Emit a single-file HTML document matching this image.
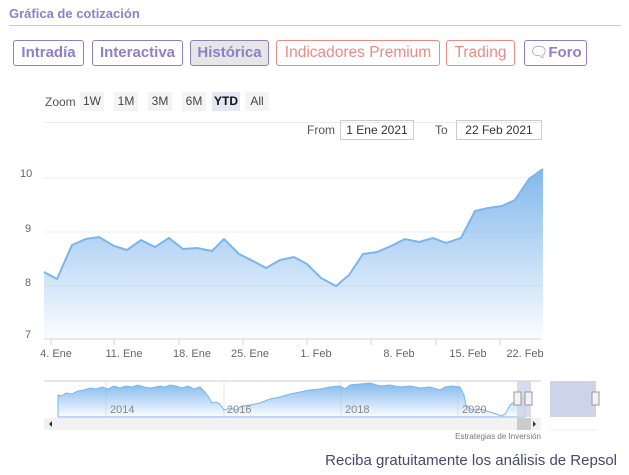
<!DOCTYPE html>
<html><head><meta charset="utf-8"><style>
body{margin:0;width:629px;height:475px;background:#fff;font-family:"Liberation Sans",sans-serif;position:relative;overflow:hidden}
.t{position:absolute;left:9px;top:6px;font-size:13px;font-weight:bold;color:#8d7fc9}
.hr{position:absolute;left:9px;top:25px;width:612px;height:1px;background:#cfc6e8}
.b{position:absolute;top:40px;height:26px;box-sizing:border-box;border:1px solid #8d7fc9;border-radius:3px;font-size:15px;font-weight:bold;color:#8d7fc9;line-height:24px;text-align:center;white-space:nowrap}
.r{border-color:#ec8a86;color:#ec8a86;font-weight:normal;font-size:15.5px}
.z{position:absolute;top:92px;height:19px;background:#f4f4f4;font-size:12px;color:#444;line-height:19px;text-align:center;width:24px}
.sm{position:absolute;font-size:11px;color:#555}
.inp{position:absolute;top:120px;height:20px;box-sizing:border-box;border:1px solid #ccc;font-size:12px;color:#333;text-align:center;line-height:18px}
</style></head><body>
<div class="t">Gráfica de cotización</div><div class="hr"></div>
<div class="b" style="left:13px;width:71px">Intradía</div>
<div class="b" style="left:92px;width:91px">Interactiva</div>
<div class="b" style="left:190px;width:79px;background:#e6e6e6">Histórica</div>
<div class="b r" style="left:276px;width:164px">Indicadores Premium</div>
<div class="b r" style="left:446px;width:69px">Trading</div>
<div class="b" style="left:524px;width:63px"><span style="font-weight:normal">🗨</span>Foro</div>
<div class="sm" style="left:45px;top:95px;font-size:12px">Zoom</div>
<div class="z" style="left:80px">1W</div><div class="z" style="left:114px">1M</div><div class="z" style="left:148px">3M</div><div class="z" style="left:182px">6M</div><div class="z" style="left:212px;width:28px;background:#e4e8f4;font-weight:bold;color:#111">YTD</div><div class="z" style="left:245px">All</div>
<div style="position:absolute;left:44px;top:122px;width:497px;height:1px;background:#ececec"></div>
<div class="sm" style="left:307px;top:123px;font-size:12px">From</div>
<div class="inp" style="left:340px;width:74px">1 Ene 2021</div>
<div class="sm" style="left:435px;top:123px;font-size:12px">To</div>
<div class="inp" style="left:456px;width:86px">22 Feb 2021</div>
<svg style="position:absolute;left:0;top:0" width="629" height="475">
<defs><linearGradient id="g" x1="0" y1="0" x2="0" y2="1"><stop offset="0" stop-color="#7cb5ec" stop-opacity=".95"/><stop offset="1" stop-color="#7cb5ec" stop-opacity=".03"/></linearGradient></defs>
<g stroke="#ececec"><line x1="44" x2="541" y1="178" y2="178"/><line x1="44" x2="541" y1="232" y2="232"/><line x1="44" x2="541" y1="286" y2="286"/></g>
<path d="M44,272 L57,279 L72,245 L86,239 L99,237 L114,246 L127,250 L141,240 L155,247 L169,238 L183,249 L197,248 L212,251 L224,239 L239,254 L253,261 L266,268 L280,260 L294,257 L307,264 L321,278 L336,286 L349,275 L363,254 L377,252 L391,246 L405,239 L419,242 L433,238 L446,243 L461,238 L475,211 L488,208 L502,206 L515,200 L529,179 L543,169 L543,339 L44,339Z" fill="url(#g)"/>
<path d="M44,272 L57,279 L72,245 L86,239 L99,237 L114,246 L127,250 L141,240 L155,247 L169,238 L183,249 L197,248 L212,251 L224,239 L239,254 L253,261 L266,268 L280,260 L294,257 L307,264 L321,278 L336,286 L349,275 L363,254 L377,252 L391,246 L405,239 L419,242 L433,238 L446,243 L461,238 L475,211 L488,208 L502,206 L515,200 L529,179 L543,169" fill="none" stroke="#7cb5ec" stroke-width="2"/>
<line x1="44" x2="541" y1="339" y2="339" stroke="#ccd6eb"/>
<g stroke="#ccd6eb"><line x1="51" x2="51" y1="339" y2="345"/><line x1="114" x2="114" y1="339" y2="345"/><line x1="179" x2="179" y1="339" y2="345"/><line x1="243" x2="243" y1="339" y2="345"/><line x1="307" x2="307" y1="339" y2="345"/><line x1="371" x2="371" y1="339" y2="345"/><line x1="436" x2="436" y1="339" y2="345"/><line x1="500" x2="500" y1="339" y2="345"/></g>
<g font-size="11" fill="#666" font-family="Liberation Sans"><text x="20" y="177">10</text><text x="25" y="232">9</text><text x="25" y="286">8</text><text x="25" y="338">7</text>
<g text-anchor="middle"><text x="56" y="357">4. Ene</text><text x="124" y="357">11. Ene</text><text x="192" y="357">18. Ene</text><text x="250" y="357">25. Ene</text><text x="316" y="357">1. Feb</text><text x="399" y="357">8. Feb</text><text x="468" y="357">15. Feb</text><text x="525" y="357">22. Feb</text></g></g>
<line x1="44" x2="541" y1="381" y2="381" stroke="#ccc"/>
<g stroke="#e6e6e6"><line x1="106" x2="106" y1="381" y2="417"/><line x1="224" x2="224" y1="381" y2="417"/><line x1="341" x2="341" y1="381" y2="417"/><line x1="458" x2="458" y1="381" y2="417"/></g>
<path d="M58,395 L62,396 L66,393 L72,394 L78,391 L84,390 L90,388 L96,389 L102,387 L108,389 L114,386 L120,388 L126,386 L132,387 L138,385 L144,387 L150,388 L156,387 L160,386 L165,387 L170,385 L176,386 L182,388 L188,386 L194,389 L200,387 L204,391 L208,396 L212,403 L216,402 L220,404 L224,410 L230,408 L236,410 L242,406 L250,405 L260,403 L270,399 L280,397 L290,394 L300,392 L310,390 L320,389 L330,387 L340,386 L345,389 L350,385 L360,384 L370,383 L380,386 L390,385 L400,387 L410,386 L420,388 L430,387 L440,390 L445,387 L452,386 L460,387 L464,395 L466,405 L472,410 L478,409 L484,410 L490,412 L496,414 L502,416 L506,413 L510,405 L516,401 L525,397 L525,417 L58,417Z" fill="url(#g)" stroke="#7cb5ec" stroke-width="1"/>
<g font-size="11" fill="#888"><text x="110" y="413">2014</text><text x="227" y="413">2016</text><text x="345" y="413">2018</text><text x="462" y="413">2020</text></g>
<rect x="517" y="381" width="14" height="36" fill="#cdd3e8" opacity=".8"/>
<rect x="514" y="392" width="7" height="13" fill="#f2f2f2" stroke="#999"/><rect x="525" y="392" width="7" height="13" fill="#f2f2f2" stroke="#999"/>
<rect x="44" y="418" width="497" height="12" fill="#f2f2f2"/>
<rect x="517" y="418" width="14" height="12" fill="#ccc"/>
<path d="M49,424 l3,-3 v6z M536,424 l-3,-3 v6z" fill="#333"/>
<rect x="550" y="381" width="46" height="36" fill="#cdd3e8"/>
<rect x="592" y="392" width="7" height="13" fill="#f2f2f2" stroke="#999"/>
<line x1="550" x2="596" y1="430" y2="430" stroke="#eee"/>
<text x="541" y="439" font-size="8" fill="#777" text-anchor="end">Estrategias de Inversión</text>
<text x="617" y="465" font-size="15" fill="#4a4578" text-anchor="end">Reciba gratuitamente los análisis de Repsol</text>
</svg>
</body></html>
